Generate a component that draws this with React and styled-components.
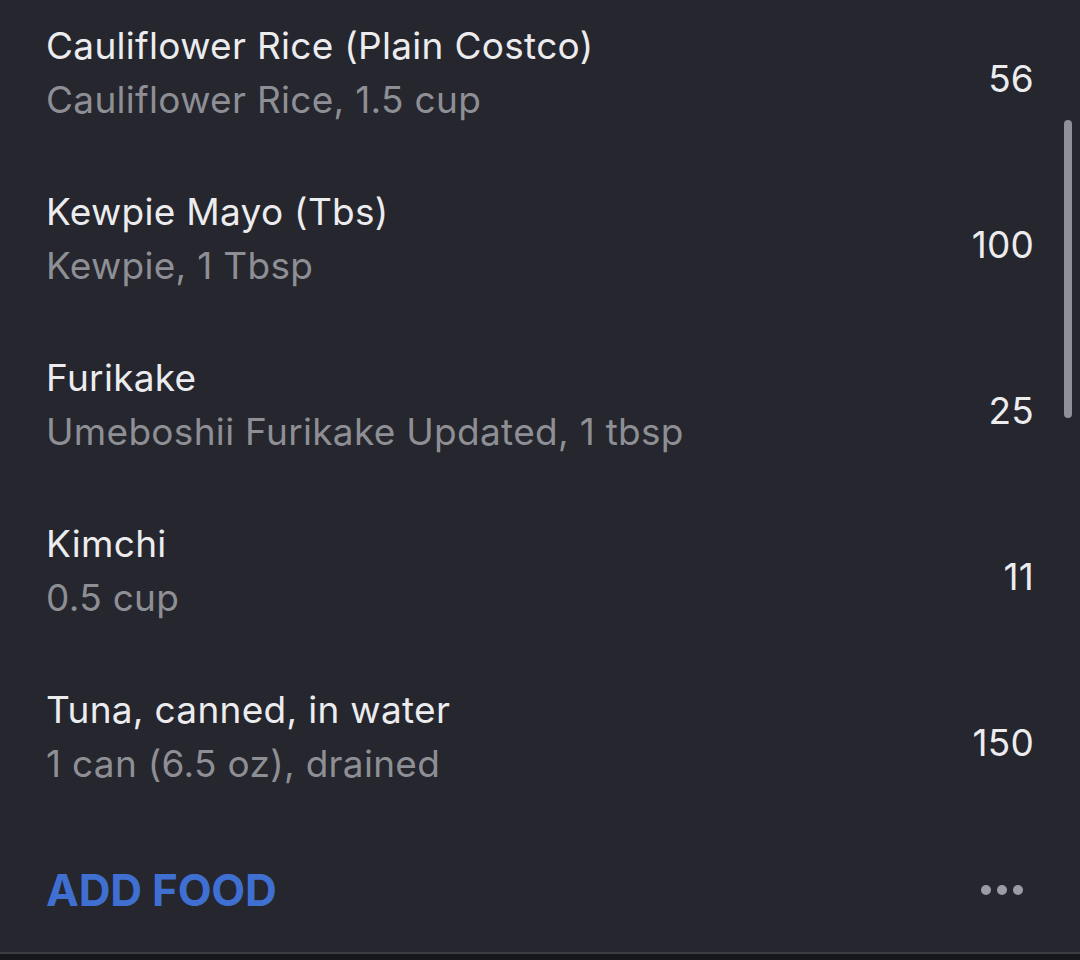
import React from "react";
import styled, { createGlobalStyle } from "styled-components";

const GlobalStyle = createGlobalStyle`
  html, body {
    margin: 0;
    padding: 0;
    background: #25262e;
  }
  body {
    font-family: Inter, "Noto Sans", "Liberation Sans", sans-serif;
    -webkit-font-smoothing: antialiased;
  }
`;

const Screen = styled.div`
  position: relative;
  width: 1080px;
  height: 960px;
  overflow: hidden;
  background: #25262e;
  display: flex;
  flex-direction: column;
`;

const List = styled.div`
  display: flex;
  flex-direction: column;
  margin-top: -10px;
`;

const Row = styled.div`
  height: 166px;
  flex: none;
  display: flex;
  align-items: center;
  justify-content: space-between;
  padding: 0 46px;
`;

const Info = styled.div`
  display: flex;
  flex-direction: column;
`;

const Title = styled.div`
  font-size: 37px;
  line-height: 54px;
  color: #ececef;
  letter-spacing: 0.3px;
`;

const Subtitle = styled.div`
  font-size: 37px;
  line-height: 54px;
  color: #8e8f95;
  letter-spacing: 0.3px;
`;

const Calories = styled.div`
  font-size: 37px;
  line-height: 54px;
  color: #ececef;
  padding-top: 12px;
  letter-spacing: 0.2px;
`;

const Footer = styled.div`
  flex: 1;
  display: flex;
  align-items: center;
  justify-content: space-between;
  padding: 8px 57px 0 46px;
`;

const AddButton = styled.button`
  background: none;
  border: none;
  padding: 0;
  font-family: inherit;
  font-size: 44px;
  font-weight: 700;
  color: #3f70d1;
  letter-spacing: -0.2px;
  cursor: pointer;
`;

const Dots = styled.div`
  display: flex;
  gap: 6px;
`;

const Dot = styled.span`
  width: 10px;
  height: 10px;
  border-radius: 50%;
  background: #9c9da4;
`;

const BottomEdge = styled.div`
  flex: none;
  height: 6px;
  background: #16161d;
  border-top: 2px solid #3a3c44;
`;

const ScrollThumb = styled.div`
  position: absolute;
  right: 8px;
  top: 120px;
  width: 8px;
  height: 298px;
  border-radius: 4px;
  background: #8f9098;
`;

const foods = [
  { name: "Cauliflower Rice (Plain Costco)", detail: "Cauliflower Rice, 1.5 cup", cal: 56 },
  { name: "Kewpie Mayo (Tbs)", detail: "Kewpie, 1 Tbsp", cal: 100 },
  { name: "Furikake", detail: "Umeboshii Furikake Updated, 1 tbsp", cal: 25 },
  { name: "Kimchi", detail: "0.5 cup", cal: 11 },
  { name: "Tuna, canned, in water", detail: "1 can (6.5 oz), drained", cal: 150 },
];

export default function App() {
  return (
    <>
      <GlobalStyle />
      <Screen>
        <List>
          {foods.map((f) => (
            <Row key={f.name}>
              <Info>
                <Title>{f.name}</Title>
                <Subtitle>{f.detail}</Subtitle>
              </Info>
              <Calories>{f.cal}</Calories>
            </Row>
          ))}
        </List>
        <Footer>
          <AddButton>ADD FOOD</AddButton>
          <Dots>
            <Dot />
            <Dot />
            <Dot />
          </Dots>
        </Footer>
        <BottomEdge />
        <ScrollThumb />
      </Screen>
    </>
  );
}
